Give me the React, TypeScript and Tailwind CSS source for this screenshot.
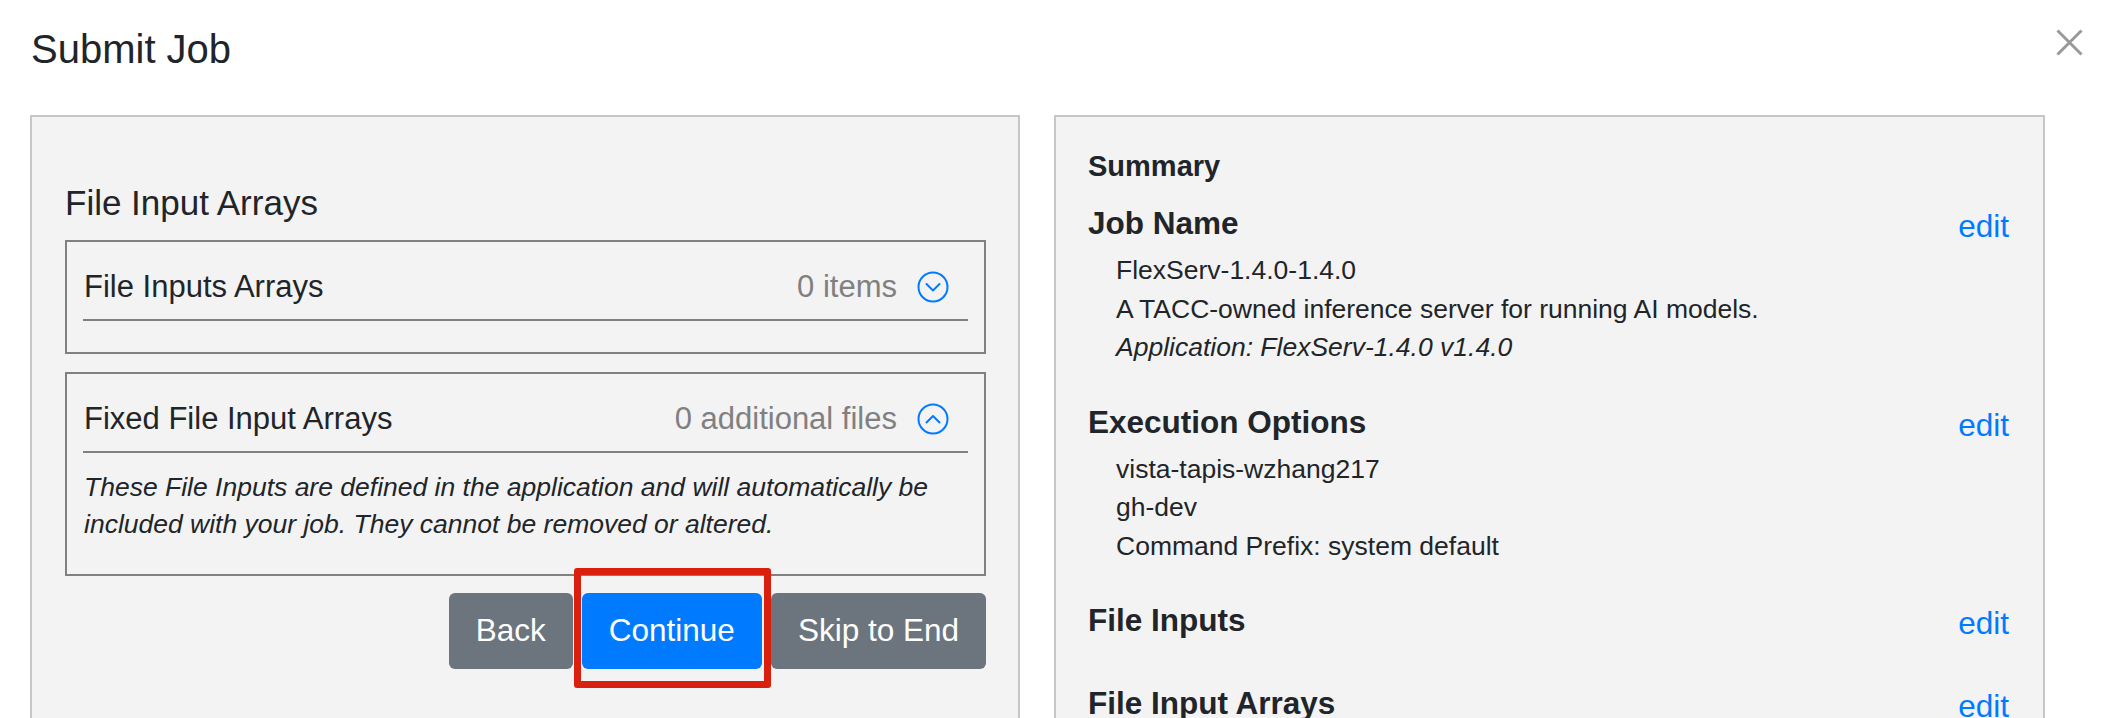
import React from 'react';

interface SectionProps {
  title: string;
  items?: React.ReactNode[];
}

const ChevronCircle: React.FC<{ up?: boolean }> = ({ up = false }) => (
  <svg width="32" height="32" viewBox="0 0 32 32" fill="none" stroke="#007bff" strokeWidth={2}>
    <circle cx="16" cy="16" r="14.5" />
    {up ? (
      <path d="M9.5 19.5L16 13l6.5 6.5" strokeLinecap="round" strokeLinejoin="round" />
    ) : (
      <path d="M9.5 13L16 19.5 22.5 13" strokeLinecap="round" strokeLinejoin="round" />
    )}
  </svg>
);

// 左側のアコーディオン
const ArrayBox: React.FC<{ title: string; count: string; open?: boolean; children?: React.ReactNode }> = ({
  title,
  count,
  open = false,
  children,
}) => (
  <div className="border-2 border-[#808080] px-[16px] pt-[22px] pb-[31px]">
    <div className="flex h-[46px] items-center justify-between border-b-2 border-[#808080] pl-[1px] pr-[19px] box-content pb-[9px]">
      <span className="text-[31px] leading-[46px] text-[#212529]">{title}</span>
      <div className="flex items-center gap-[20px]">
        <span className="text-[31px] leading-[46px] text-[#808080]">{count}</span>
        <ChevronCircle up={open} />
      </div>
    </div>
    {children}
  </div>
);

// 右側のサマリー項目
const SummarySection: React.FC<SectionProps> = ({ title, items = [] }) => (
  <div className="mb-[35px] flex flex-col">
    <div className="flex h-[40px] items-start justify-between">
      <span className="text-[31.5px] font-bold leading-[40px] text-[#212529]">{title}</span>
      <span className="pt-[3px] text-[31.5px] leading-[40px] text-[#007bff]">edit</span>
    </div>
    <ul className="mt-[8px] pl-[28px]">
      {items.map((item, i) => (
        <li key={i} className="text-[26.5px] leading-[38.5px] text-[#212529]">
          {item}
        </li>
      ))}
    </ul>
  </div>
);

const App: React.FC = () => {
  return (
    <div className="min-h-screen bg-white font-['Liberation_Sans',Arial,sans-serif] text-[#212529]">
      {/* ヘッダー */}
      <div className="flex items-start justify-between">
        <h1 className="pl-[31px] pt-[25px] text-[40px] leading-[48px] font-normal text-[#212529]">Submit Job</h1>
        <button type="button" className="mt-[29px] mr-[29px]" aria-label="Close">
          <svg width="27" height="27" viewBox="0 0 27 27" stroke="#999999" strokeWidth={3}>
            <path d="M1.5 1.5L25.5 25.5M25.5 1.5L1.5 25.5" />
          </svg>
        </button>
      </div>

      <div className="mt-[42px] flex gap-[34px] pl-[30px] pr-[67px]">
        {/* 左パネル */}
        <div className="flex-1 border-2 border-[#c6c6c6] bg-[#f3f3f3] pl-[33px] pr-[32px] pt-[65px] pb-[80px]">
          <h2 className="text-[35px] leading-[42px] font-normal text-[#212529]">File Input Arrays</h2>
          <div className="mt-[16px] flex flex-col gap-[18px]">
            <ArrayBox title="File Inputs Arrays" count="0 items" />
            <ArrayBox title="Fixed File Input Arrays" count="0 additional files" open>
              <p className="mt-[16px] pl-[1px] text-[26.5px] italic leading-[37px] text-[#212529]">
                These File Inputs are defined in the application and will automatically be included with your job.
                They cannot be removed or altered.
              </p>
            </ArrayBox>
          </div>
          <div className="mt-[17px] flex justify-end gap-[9px]">
            <button type="button" className="h-[76px] rounded-[6px] bg-[#6c757d] px-[27px] text-[31.5px] text-white">
              Back
            </button>
            <span className="relative">
              <button type="button" className="h-[76px] rounded-[6px] bg-[#007bff] px-[27px] text-[31.5px] text-white">
                Continue
              </button>
              <span className="pointer-events-none absolute -left-[8px] -right-[9px] -top-[25px] -bottom-[19px] rounded-[3px] border-[7px] border-[#d9200f]" />
            </span>
            <button type="button" className="h-[76px] rounded-[6px] bg-[#6c757d] px-[27px] text-[31.5px] text-white">
              Skip to End
            </button>
          </div>
        </div>

        {/* 右パネル */}
        <div className="flex-1 border-2 border-[#c6c6c6] bg-[#f3f3f3] pl-[32px] pr-[34px] pt-[32px] pb-[40px]">
          <h3 className="text-[29px] font-bold leading-[34px] text-[#212529]">Summary</h3>
          <div className="mt-[20px]">
            <SummarySection
              title="Job Name"
              items={[
                'FlexServ-1.4.0-1.4.0',
                'A TACC-owned inference server for running AI models.',
                <em key="app">Application: FlexServ-1.4.0 v1.4.0</em>,
              ]}
            />
            <SummarySection
              title="Execution Options"
              items={['vista-tapis-wzhang217', 'gh-dev', 'Command Prefix: system default']}
            />
            <SummarySection title="File Inputs" />
            <SummarySection title="File Input Arrays" />
          </div>
        </div>
      </div>
    </div>
  );
};

export default App;
